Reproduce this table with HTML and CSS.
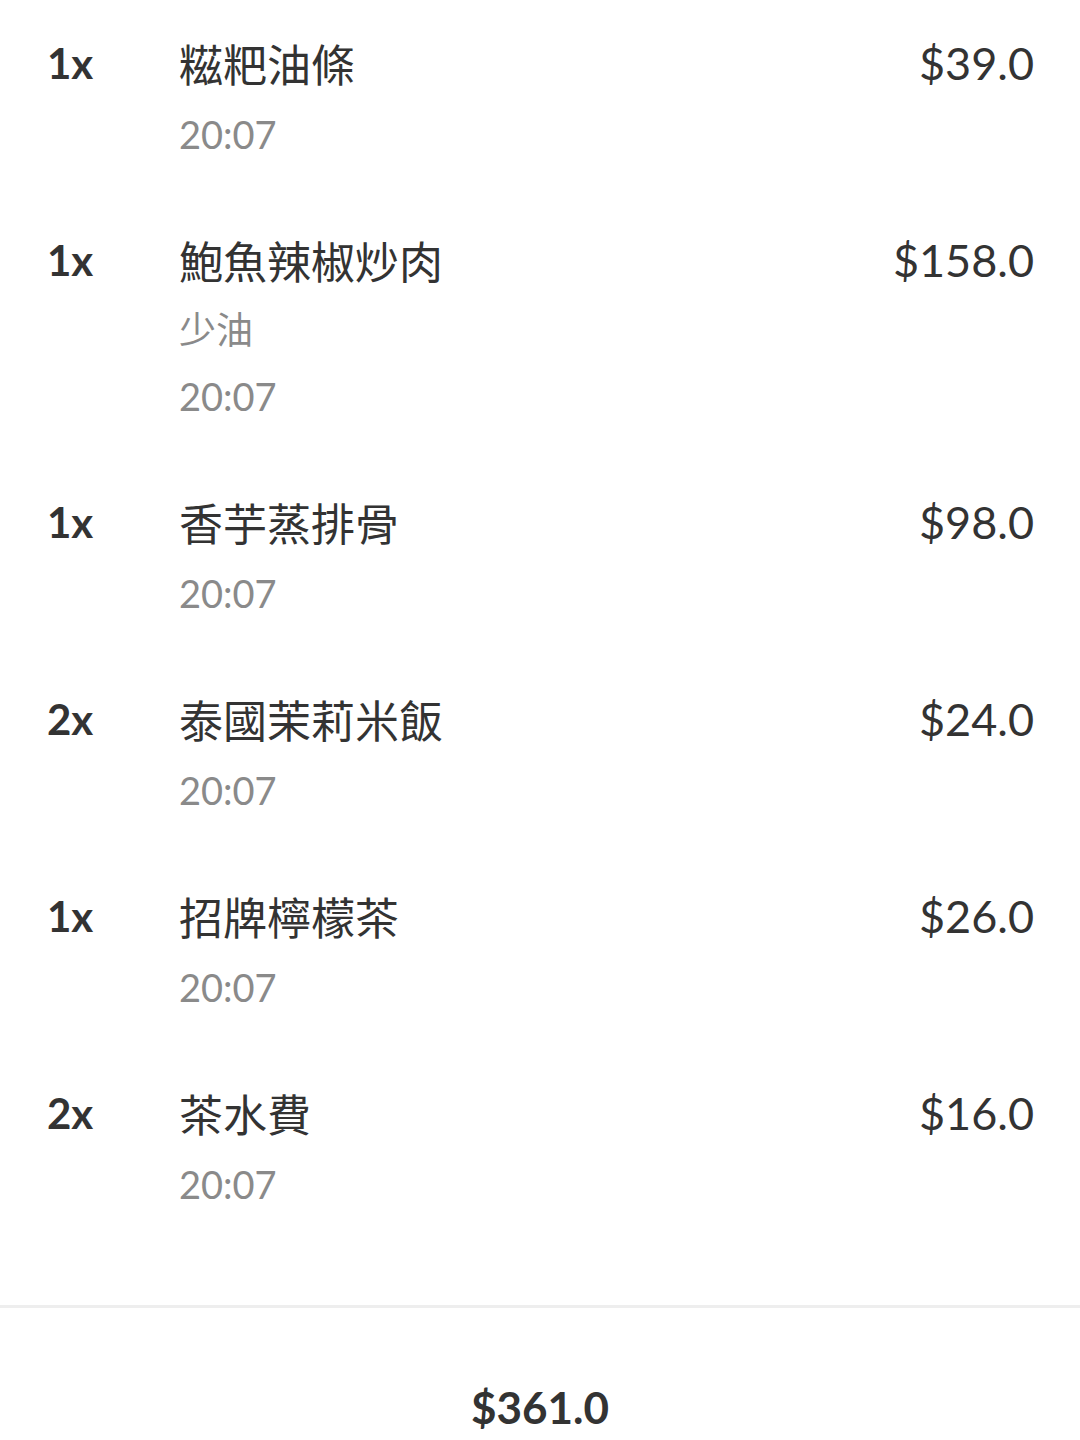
FILE: index.html
```html
<!DOCTYPE html>
<html lang="zh-Hant">
<head>
<meta charset="utf-8">
<link rel="stylesheet" href="styles.css">
</head>
<body>
<div class="list">
  <div class="row">
    <div class="qty">1x</div>
    <div class="info">
      <div class="name">糍粑油條</div>
      <div class="sub">20:07</div>
    </div>
    <div class="price">$39.0</div>
  </div>
  <div class="row">
    <div class="qty">1x</div>
    <div class="info">
      <div class="name">鮑魚辣椒炒肉</div>
      <div class="sub note">少油</div>
      <div class="sub">20:07</div>
    </div>
    <div class="price">$158.0</div>
  </div>
  <div class="row">
    <div class="qty">1x</div>
    <div class="info">
      <div class="name">香芋蒸排骨</div>
      <div class="sub">20:07</div>
    </div>
    <div class="price">$98.0</div>
  </div>
  <div class="row">
    <div class="qty">2x</div>
    <div class="info">
      <div class="name">泰國茉莉米飯</div>
      <div class="sub">20:07</div>
    </div>
    <div class="price">$24.0</div>
  </div>
  <div class="row">
    <div class="qty">1x</div>
    <div class="info">
      <div class="name">招牌檸檬茶</div>
      <div class="sub">20:07</div>
    </div>
    <div class="price">$26.0</div>
  </div>
  <div class="row">
    <div class="qty">2x</div>
    <div class="info">
      <div class="name">茶水費</div>
      <div class="sub">20:07</div>
    </div>
    <div class="price">$16.0</div>
  </div>
</div>
<div class="footer">
  <div class="total">$361.0</div>
</div>
</body>
</html>
```
FILE: styles.css
```css
html, body {
  margin: 0;
  padding: 0;
  background: #ffffff;
}
body {
  width: 1080px;
  height: 1440px;
  overflow: hidden;
  font-family: Lato, "Noto Sans CJK TC", "Noto Sans", sans-serif;
  color: #333333;
}
.list {
  display: flex;
  flex-direction: column;
  gap: 63px;
  padding: 33px 46px 88px 47px;
}
.row {
  display: flex;
  align-items: flex-start;
}
.qty {
  width: 132px;
  flex: none;
  font-size: 42px;
  font-weight: 700;
  line-height: 60px;
  color: #333333;
}
.info {
  flex: 1;
  display: flex;
  flex-direction: column;
}
.name {
  font-family: "Noto Sans CJK TC", sans-serif;
  font-size: 44px;
  line-height: 60px;
  color: #333333;
  margin-bottom: 8px;
}
.sub {
  font-size: 38px;
  line-height: 66px;
  color: #8a8a8a;
}
.note {
  font-family: "Noto Sans CJK TC", sans-serif;
  font-size: 37px;
  margin-top: -3px;
  margin-bottom: 2px;
}
.price {
  flex: none;
  font-size: 45px;
  line-height: 60px;
  color: #333333;
  text-align: right;
}
.footer {
  border-top: 3px solid #eeeeee;
  padding-top: 69px;
  display: flex;
  justify-content: center;
}
.total {
  font-size: 44px;
  font-weight: 700;
  line-height: 60px;
  color: #333333;
}
```
